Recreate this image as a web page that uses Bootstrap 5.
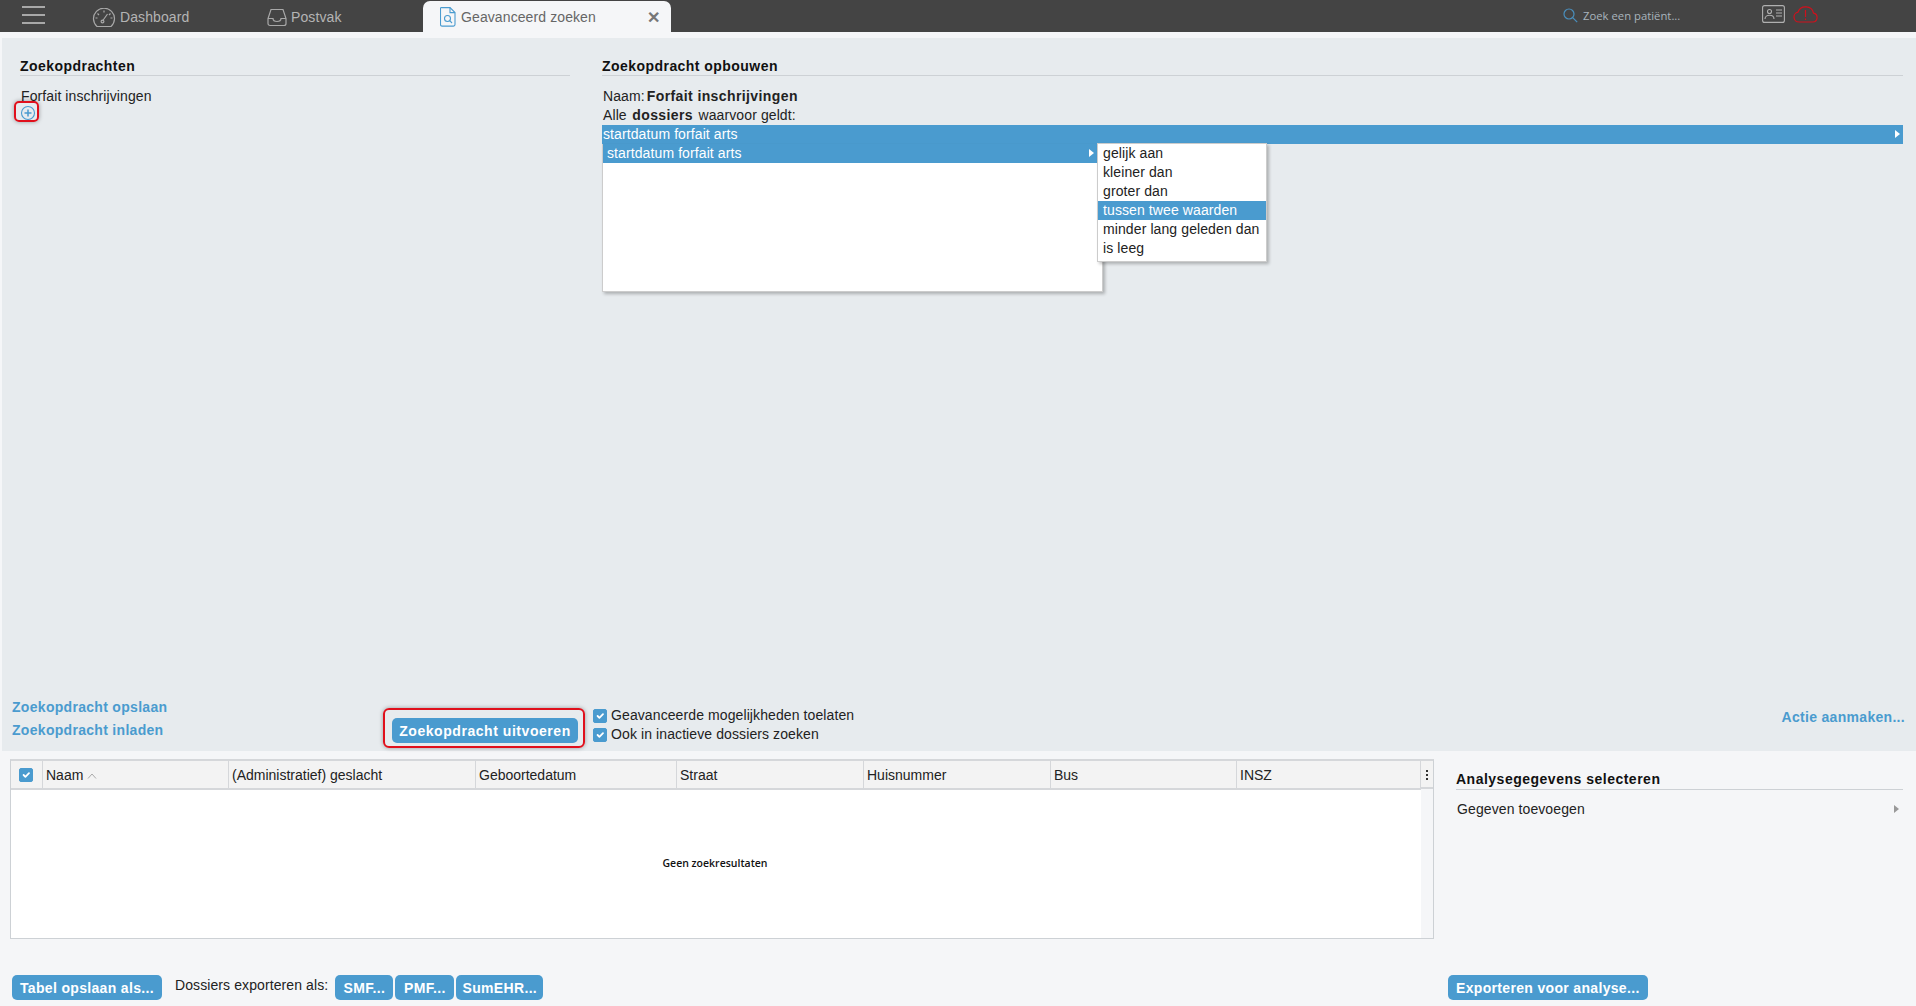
<!DOCTYPE html>
<html lang="nl">
<head>
<meta charset="utf-8">
<title>Geavanceerd zoeken</title>
<link href="https://cdn.jsdelivr.net/npm/bootstrap@5.3.0/dist/css/bootstrap.min.css" rel="stylesheet">
<style>
html, body { height: 100%; }
body { font-family: "Liberation Sans", Arial, sans-serif; font-size: 14px; line-height: 19px; letter-spacing: .1px; color: #222; background: #f5f6f8; overflow: hidden; }
strong { letter-spacing: .4px; }
.name-val { margin-left: -2px; }
.type-val { margin: 0 1.5px; }
.app-top { height: 32px; background: #444; color: #b4b4b4; flex: none; }
.burger { width: 23px; margin: -2px 47px 0 22px; gap: 6px; }
.burger span { display: block; height: 2px; background: #a8a8a8; }
.top-item { gap: 4px; margin-top: 3px; }
.item-dash { width: 175px; }
.item-post { width: 156px; }
.app-tab { width: 248px; height: 31px; margin-top: 1px; background: #f5f6f8; color: #666; border-radius: 7px 7px 0 0; padding: 1px 11px 0 17px; }
.tab-label { margin-left: 5px; }
.app-tab b { font-size: 16px; color: #777; }
.top-search { margin-left: auto; width: 199px; color: #a9b4bd; font-family: "Open Sans", sans-serif; font-size: 11.3px; letter-spacing: 0; gap: 5px; margin-top: -2px; }
.top-right { gap: 8px; margin: -4px 98px 0 0; }
.upper-panel { height: 713px; margin: 6px 0 0 2px; background: #e7ebee; flex: none; }
.builder-row { flex: 1; padding: 19px 13px 0 18px; min-height: 0; }
.col-queries { width: 550px; margin-right: 32px; flex: none; }
.col-builder { flex: 1; position: relative; }
.sec-title { font-weight: 700; color: #111; letter-spacing: .45px; line-height: 19px; border-bottom: 1px solid #cdd1d5; margin: 0 0 11px; height: 18px; font-size: 14px; box-sizing: content-box; }
.query-name { padding-left: 1px; }
.plus-btn { display: block; margin: -3px 0 0 0; width: 16px; height: 16px; position: relative; }
.mark-red { position: absolute; border: 2px solid #e0101c; border-radius: 5px; box-shadow: 0 0 4px rgba(0,0,0,.35); pointer-events: none; }
.plus-btn .mark-red { left: -6px; top: -2px; width: 25px; height: 21px; }
.b-line { padding-left: 1px; }
.crit-bar { background: #4a9bcf; color: #fff; height: 19px; position: relative; padding-left: 1px; }
.arrow-r { width: 0; height: 0; border-left: 5px solid #fff; border-top: 4.5px solid transparent; border-bottom: 4.5px solid transparent; position: absolute; top: 5px; }
.crit-bar .arrow-r { right: 3px; }
.menu-main { position: absolute; left: 0; top: 0; width: 501px; height: 148px; background: #fff; border: 1px solid #ccc; border-top: 0; box-shadow: 2px 2px 3px rgba(0,0,0,.25); }
.menu-sub { position: absolute; left: 494px; top: -1px; width: 170px; height: 119px; background: #fff; border: 1px solid #ccc; box-shadow: 2px 2px 3px rgba(0,0,0,.25); }
.menu-anchor { position: relative; height: 0; }
.menu-row { height: 19px; padding-left: 5px; white-space: nowrap; position: relative; }
.menu-row.is-on { background: #4a9bcf; color: #fff; }
.menu-main > .menu-row { width: 494px; padding-left: 4px; }
.menu-main .arrow-r { right: 3px; }
.action-row { height: 70px; padding: 0 11px 0 10px; position: relative; }
.link-col { width: 380px; flex: none; padding-top: 17px; }
.blue-link { display: block; color: #4a9bcf; font-weight: 700; text-decoration: none; letter-spacing: .3px; font-size: 14px; }
.blue-link + .blue-link { margin-top: 4px; }
.action-link { margin-top: 27px; }
.run-wrap { position: relative; margin: 37px 15px 0 0; }
.blue-btn { background: #4a9bcf; border: 0; color: #fff; font-weight: 700; font-size: 14px; letter-spacing: .33px; border-radius: 5px; height: 25px; padding: 2px 8px 0; line-height: 23px; white-space: nowrap; }
.run-wrap .blue-btn { width: 186px; padding: 2px 0 0; display: block; letter-spacing: .55px; }
.run-wrap .mark-red { left: -9px; top: -10px; width: 202px; height: 40px; border-radius: 6px; }
.exp-smf, .exp-pmf, .exp-sum { padding-left: 0; padding-right: 0; }
.exp-smf { width: 58px; }
.exp-pmf { width: 59px; }
.exp-sum { width: 87px; }
.opt-col { padding-top: 25px; }
.opt-line { height: 19px; gap: 4px; }
.form-check-input.tick-box, .form-check-input.tick-box:checked { width: 14px; height: 14px; margin: 0; background-color: #4a9bcf; border-color: #4a9bcf; border-radius: 2px; }
.lower-area { flex: 1; min-height: 0; padding: 8px 13px 0 10px; }
.grid-wrap { width: 1424px; height: 180px; flex: none; border: 1px solid #cdd1d5; border-top: 2px solid #d5d7da; background: #fff; position: relative; }
.res-table { table-layout: fixed; width: 1410px; margin: 0; --bs-table-bg: transparent; letter-spacing: 0; }
.res-table th { background: #f3f3f3; font-weight: 400; color: #222; height: 28px; padding: 1px 0 0 3.5px; border-bottom: 2px solid #d5d7da; border-right: 1px solid #d5d7da; vertical-align: middle; line-height: 19px; }
.res-table th:first-child { padding: 0; }
.menu-col { position: absolute; top: 0; right: 0; width: 12px; bottom: 0; background: #f5f6f8; }
.menu-col span { display: block; width: 2px; height: 2px; background: #333; margin: 0 auto 2px; }
.menu-col div { padding-top: 9px; height: 28px; border-bottom: 2px solid #d5d7da; background: #f3f3f3; }
.empty-note { position: absolute; left: 0; right: 14px; top: 94px; text-align: center; font: 600 10.5px/16px "Open Sans", sans-serif; letter-spacing: 0; color: #111; }
.side-panel { margin-left: 22px; flex: 1; padding-top: 11px; }
.side-panel .sec-title { margin-bottom: 10px; height: 19px; letter-spacing: .5px; }
.add-data { position: relative; padding-left: 1px; }
.add-data .arrow-r { border-left-color: #999; right: 4px; }
.foot-row { height: 37px; padding: 0 0 6px 12px; flex: none; }
.foot-left { width: 1436px; flex: none; gap: 2px; }
.foot-label { margin: -5px 5px 0 11px; }
</style>
</head>
<body class="d-flex flex-column">
<div class="app-top d-flex align-items-center">
    <div class="burger d-flex flex-column"><span></span><span></span><span></span></div>
    <div class="top-item item-dash d-flex align-items-center">
        <svg width="24" height="20" viewBox="0 0 24 20" fill="none" stroke="#a8a8a8" stroke-width="1.2"><path d="M5 18.500h14a10.500 10.500 0 1 0-14 0z"/><path d="M10.500 13l5-7M3.500 10h2M5.500 5.500l1.500 1.500M12 2.500v2M18.500 5.500l-1.500 1.500M20.500 10h-2"/><circle cx="10.500" cy="13.500" r="1.400"/></svg>
        <span>Dashboard</span>
    </div>
    <div class="top-item item-post d-flex align-items-center">
        <svg width="20" height="19" viewBox="0 0 20 19" fill="none" stroke="#a8a8a8" stroke-width="1.2"><path d="M4 1.500h12l3 9v5a2 2 0 0 1-2 2H3a2 2 0 0 1-2-2v-5z"/><path d="M1 10.500h5c0 4 8 4 8 0h5"/></svg>
        <span>Postvak</span>
    </div>
    <div class="app-tab d-flex align-items-center">
        <svg width="16" height="20" viewBox="0 0 16 20" fill="none" stroke="#4a9bcf" stroke-width="1.100"><path d="M2 .6h8l5 5v12a1.500 1.500 0 0 1-1.500 1.500h-11.500a1.500 1.500 0 0 1-1.500-1.500v-16a1.500 1.500 0 0 1 1.500-1.500z"/><path d="M10 .6v5h5"/><circle cx="7.500" cy="11.500" r="3"/><path d="M9.700 13.700l2.300 2.300"/></svg>
        <span class="tab-label">Geavanceerd zoeken</span>
        <b class="ms-auto">✕</b>
    </div>
    <div class="top-search d-flex align-items-center">
        <svg width="15" height="15" viewBox="0 0 15 15" fill="none" stroke="#4a8fbd" stroke-width="1.200"><circle cx="6" cy="6" r="5"/><path d="M9.700 9.700l4.500 4.500"/></svg>
        <span>Zoek een patiënt...</span>
    </div>
    <div class="top-right d-flex align-items-center">
        <svg width="23" height="18" viewBox="0 0 23 18" fill="none" stroke="#b0b0b0" stroke-width="1.100"><rect x=".6" y=".6" width="21.800" height="16.800" rx="2"/><circle cx="7.500" cy="6.500" r="2"/><path d="M3 14c0-5 9-5 9 0M14 5h6M14 8h6M14 11h6"/></svg>
        <svg width="25" height="18" viewBox="0 0 25 18" fill="none" stroke="#d0101c" stroke-width="1.200"><path d="M6 17h13.500a4.500 4.500 0 0 0 1-8.900 8 7.500 0 0 0-15.500-1 5 5 0 0 0 1 9.900z"/><path d="M12.500 5v7M12.500 13.500v1.500"/></svg>
    </div>
</div>

<div class="upper-panel d-flex flex-column">
    <div class="builder-row d-flex">
        <div class="col-queries">
            <h2 class="sec-title">Zoekopdrachten</h2>
            <div class="query-name">Forfait inschrijvingen</div>
            <a class="plus-btn" href="#">
                <svg width="16" height="16" viewBox="0 0 16 16" fill="none" stroke="#4a9bcf" stroke-width="1.100"><circle cx="8" cy="8" r="6.500"/><path d="M8 4.500v7M4.500 8h7" stroke-width="1.500"/></svg>
                <span class="mark-red"></span>
            </a>
        </div>
        <div class="col-builder">
            <h2 class="sec-title">Zoekopdracht opbouwen</h2>
            <div class="b-line">Naam: <strong class="name-val">Forfait inschrijvingen</strong></div>
            <div class="b-line">Alle <strong class="type-val">dossiers</strong> waarvoor geldt:</div>
            <div class="crit-bar">startdatum forfait arts<span class="arrow-r"></span></div>
            <div class="menu-anchor">
                <div class="menu-main">
                    <div class="menu-row is-on">startdatum forfait arts<span class="arrow-r"></span></div>
                    <div class="menu-sub">
                        <div class="menu-row">gelijk aan</div>
                        <div class="menu-row">kleiner dan</div>
                        <div class="menu-row">groter dan</div>
                        <div class="menu-row is-on">tussen twee waarden</div>
                        <div class="menu-row">minder lang geleden dan</div>
                        <div class="menu-row">is leeg</div>
                    </div>
                </div>
            </div>
        </div>
    </div>
    <div class="action-row d-flex">
        <div class="link-col">
            <a class="blue-link" href="#">Zoekopdracht opslaan</a>
            <a class="blue-link" href="#">Zoekopdracht inladen</a>
        </div>
        <div class="run-wrap">
            <button class="blue-btn" type="button">Zoekopdracht uitvoeren</button>
            <span class="mark-red"></span>
        </div>
        <div class="opt-col">
            <div class="opt-line d-flex align-items-center"><input class="form-check-input tick-box" type="checkbox" checked><span>Geavanceerde mogelijkheden toelaten</span></div>
            <div class="opt-line d-flex align-items-center"><input class="form-check-input tick-box" type="checkbox" checked><span>Ook in inactieve dossiers zoeken</span></div>
        </div>
        <a class="blue-link action-link ms-auto" href="#">Actie aanmaken...</a>
    </div>
</div>

<div class="lower-area d-flex">
    <div class="grid-wrap">
        <table class="table res-table">
            <colgroup><col style="width:31px"><col style="width:186px"><col style="width:247px"><col style="width:201px"><col style="width:187px"><col style="width:187px"><col style="width:186px"><col></colgroup>
            <thead><tr>
                <th><input class="form-check-input tick-box d-block mx-auto" type="checkbox" checked></th>
                <th>Naam <svg width="10" height="6" viewBox="0 0 10 6" fill="none" stroke="#aaa"><path d="M1 5.500l4-4.500 4 4.500"/></svg></th>
                <th>(Administratief) geslacht</th>
                <th>Geboortedatum</th>
                <th>Straat</th>
                <th>Huisnummer</th>
                <th>Bus</th>
                <th>INSZ</th>
            </tr></thead>
        </table>
        <div class="menu-col"><div><span></span><span></span><span></span></div></div>
        <div class="empty-note">Geen zoekresultaten</div>
    </div>
    <div class="side-panel">
        <h2 class="sec-title">Analysegegevens selecteren</h2>
        <div class="add-data">Gegeven toevoegen<span class="arrow-r"></span></div>
    </div>
</div>

<div class="foot-row d-flex align-items-end">
    <div class="foot-left d-flex align-items-center">
        <button class="blue-btn" type="button">Tabel opslaan als...</button>
        <span class="foot-label">Dossiers exporteren als:</span>
        <button class="blue-btn exp-smf" type="button">SMF...</button>
        <button class="blue-btn exp-pmf" type="button">PMF...</button>
        <button class="blue-btn exp-sum" type="button">SumEHR...</button>
    </div>
    <button class="blue-btn" type="button">Exporteren voor analyse...</button>
</div>
<script src="https://cdn.jsdelivr.net/npm/bootstrap@5.3.0/dist/js/bootstrap.bundle.min.js"></script>
</body>
</html>
